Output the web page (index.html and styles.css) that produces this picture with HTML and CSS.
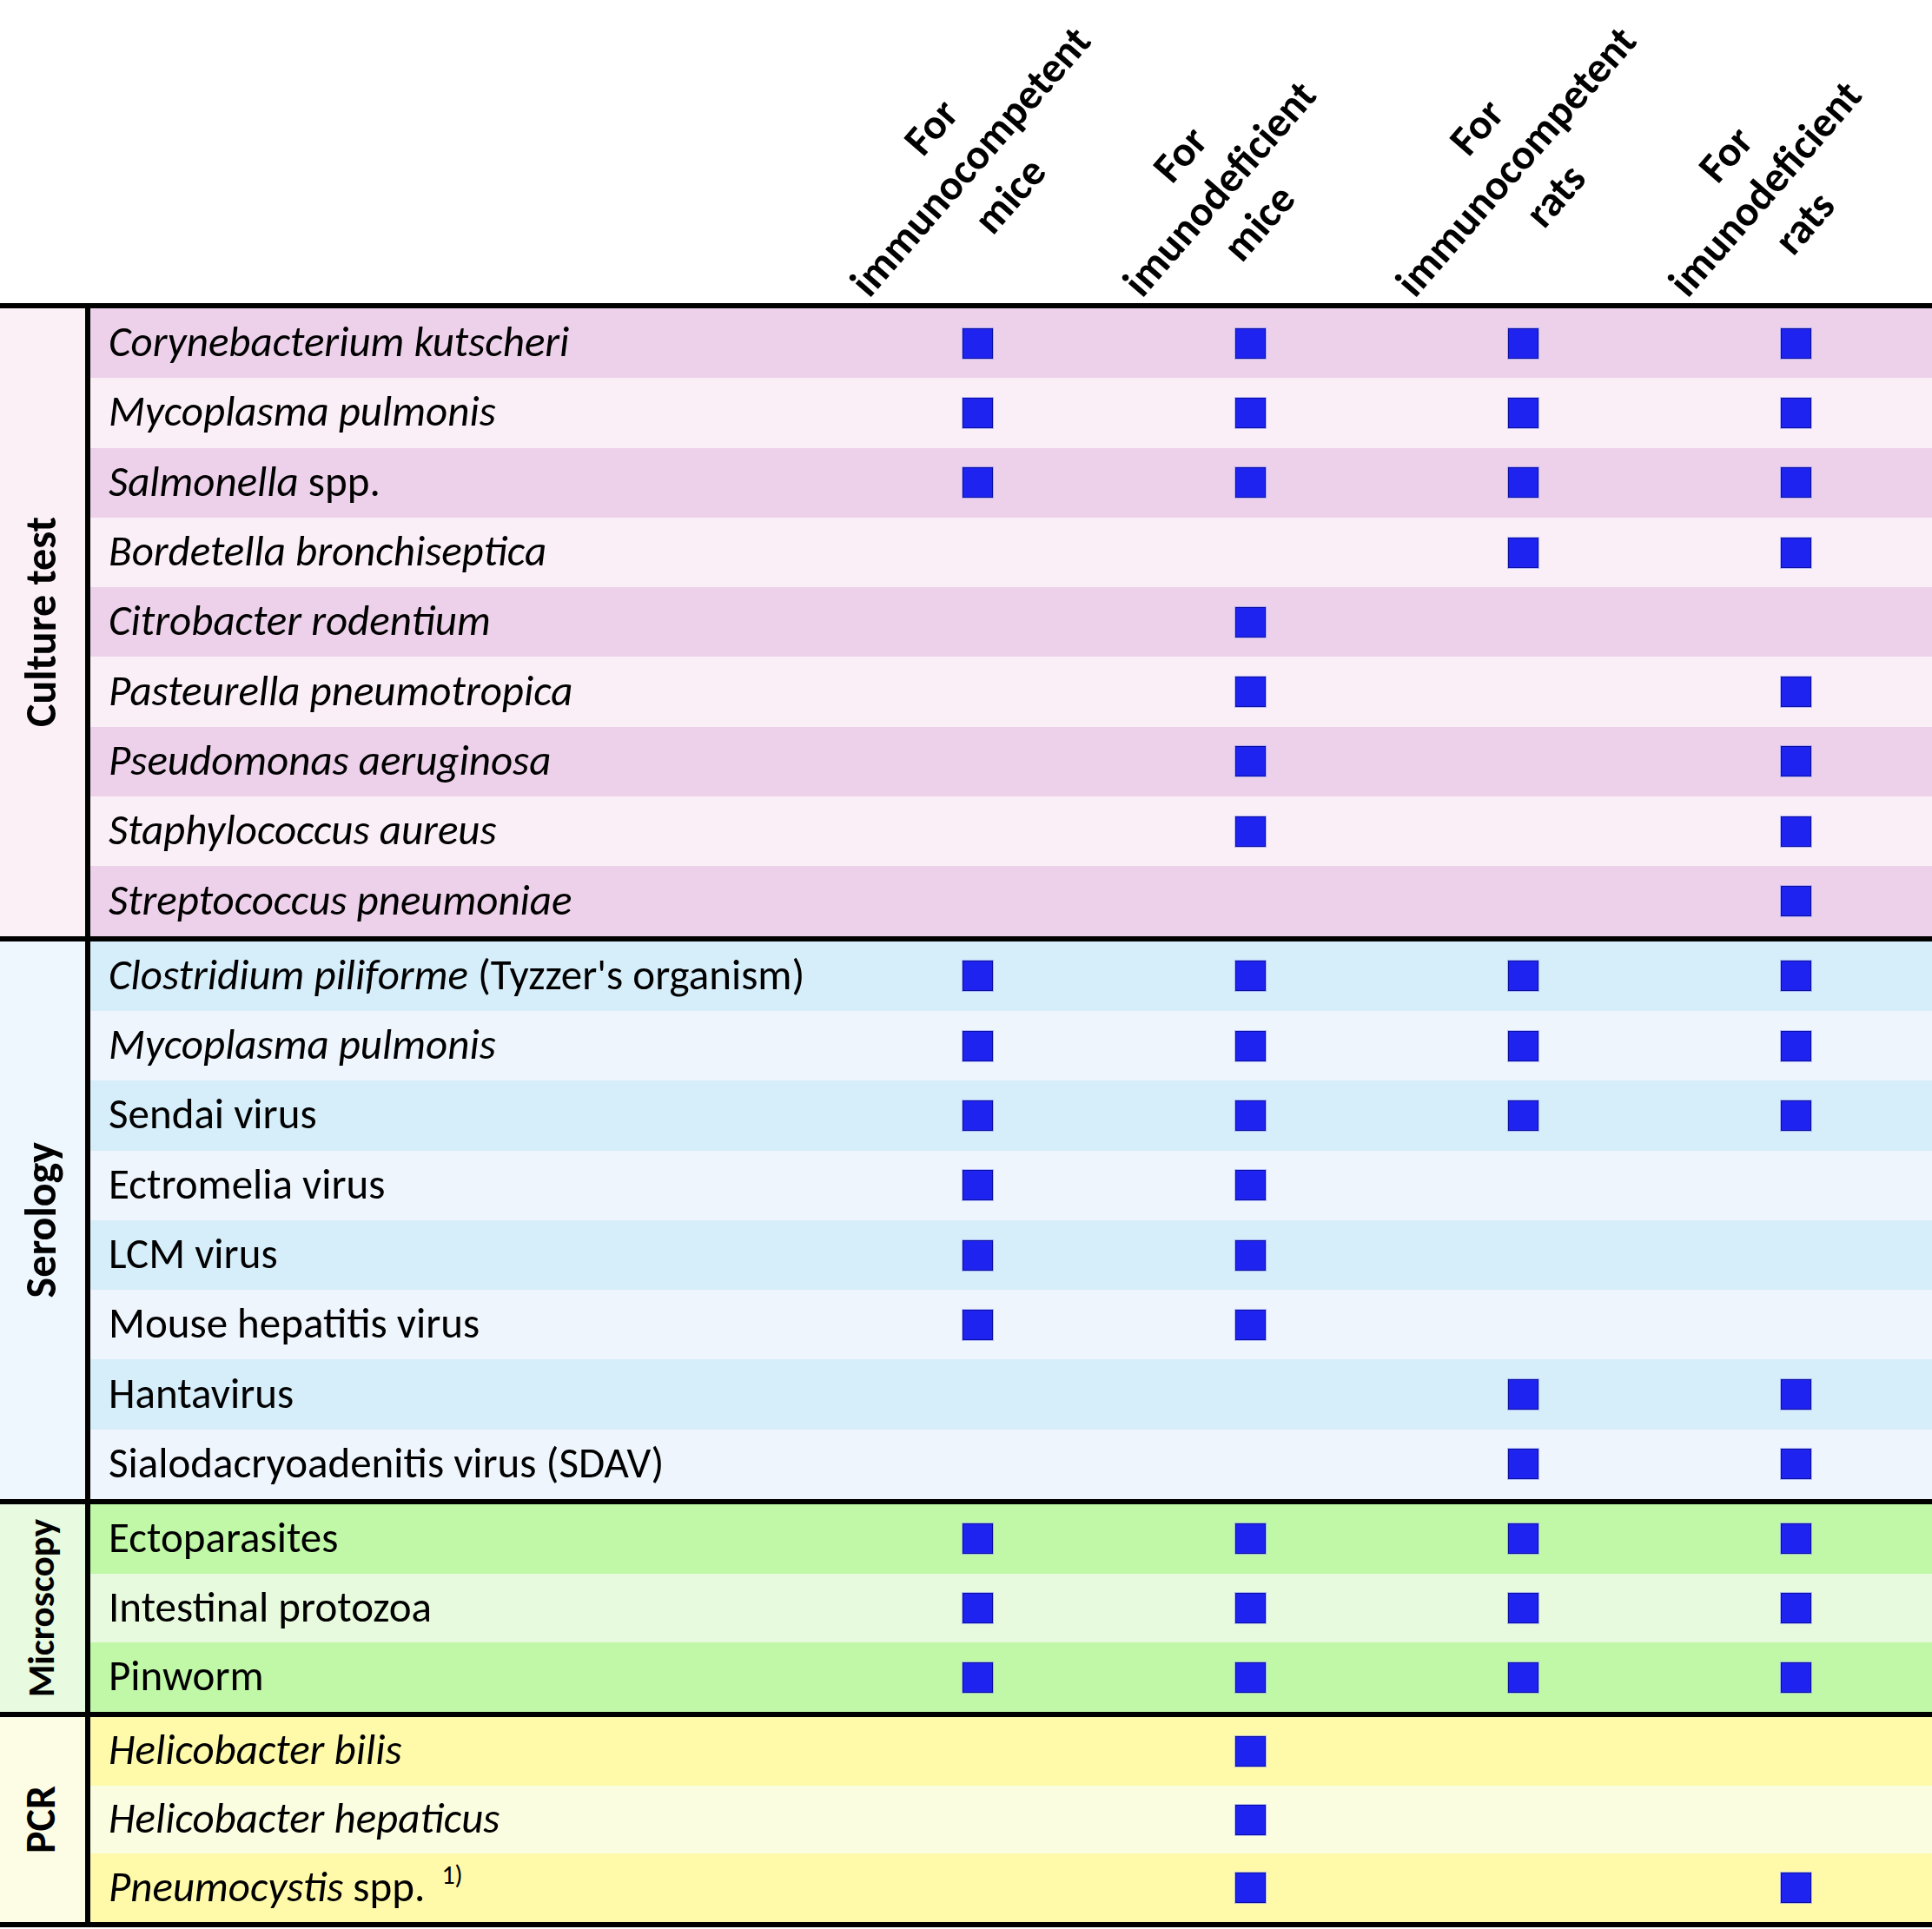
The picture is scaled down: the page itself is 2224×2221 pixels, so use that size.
FILE: index.html
```html
<!DOCTYPE html>
<html>
<head>
<meta charset="utf-8">
<link rel="stylesheet" href="styles.css">
</head>
<body>
<div class="table">
  <div class="head">
    <div class="head-spacer"></div>
    <div class="colhead"><div class="anchor"><div class="rot">For<br>immunocompetent<br>mice</div></div></div>
    <div class="colhead"><div class="anchor"><div class="rot">For<br>imunodeficient<br>mice</div></div></div>
    <div class="colhead"><div class="anchor"><div class="rot">For<br>immunocompetent<br>rats</div></div></div>
    <div class="colhead"><div class="anchor"><div class="rot">For<br>imunodeficient<br>rats</div></div></div>
  </div>
  <div class="rule"></div>
  <section class="group culture">
    <div class="glabel"><span>Culture test</span></div>
    <div class="vline"></div>
    <div class="rows">
      <div class="row"><div class="name"><i>Corynebacterium kutscheri</i></div><div class="cell"><span class="sq"></span></div><div class="cell"><span class="sq"></span></div><div class="cell"><span class="sq"></span></div><div class="cell"><span class="sq"></span></div></div>
      <div class="row"><div class="name"><i>Mycoplasma pulmonis</i></div><div class="cell"><span class="sq"></span></div><div class="cell"><span class="sq"></span></div><div class="cell"><span class="sq"></span></div><div class="cell"><span class="sq"></span></div></div>
      <div class="row"><div class="name"><i>Salmonella</i> spp.</div><div class="cell"><span class="sq"></span></div><div class="cell"><span class="sq"></span></div><div class="cell"><span class="sq"></span></div><div class="cell"><span class="sq"></span></div></div>
      <div class="row"><div class="name"><i>Bordetella bronchiseptica</i></div><div class="cell"></div><div class="cell"></div><div class="cell"><span class="sq"></span></div><div class="cell"><span class="sq"></span></div></div>
      <div class="row"><div class="name"><i>Citrobacter rodentium</i></div><div class="cell"></div><div class="cell"><span class="sq"></span></div><div class="cell"></div><div class="cell"></div></div>
      <div class="row"><div class="name"><i>Pasteurella pneumotropica</i></div><div class="cell"></div><div class="cell"><span class="sq"></span></div><div class="cell"></div><div class="cell"><span class="sq"></span></div></div>
      <div class="row"><div class="name"><i>Pseudomonas aeruginosa</i></div><div class="cell"></div><div class="cell"><span class="sq"></span></div><div class="cell"></div><div class="cell"><span class="sq"></span></div></div>
      <div class="row"><div class="name"><i>Staphylococcus aureus</i></div><div class="cell"></div><div class="cell"><span class="sq"></span></div><div class="cell"></div><div class="cell"><span class="sq"></span></div></div>
      <div class="row"><div class="name"><i>Streptococcus pneumoniae</i></div><div class="cell"></div><div class="cell"></div><div class="cell"></div><div class="cell"><span class="sq"></span></div></div>
    </div>
  </section>
  <div class="rule"></div>
  <section class="group serology">
    <div class="glabel"><span>Serology</span></div>
    <div class="vline"></div>
    <div class="rows">
      <div class="row"><div class="name"><i>Clostridium piliforme</i> (Tyzzer's organism)</div><div class="cell"><span class="sq"></span></div><div class="cell"><span class="sq"></span></div><div class="cell"><span class="sq"></span></div><div class="cell"><span class="sq"></span></div></div>
      <div class="row"><div class="name"><i>Mycoplasma pulmonis</i></div><div class="cell"><span class="sq"></span></div><div class="cell"><span class="sq"></span></div><div class="cell"><span class="sq"></span></div><div class="cell"><span class="sq"></span></div></div>
      <div class="row"><div class="name">Sendai virus</div><div class="cell"><span class="sq"></span></div><div class="cell"><span class="sq"></span></div><div class="cell"><span class="sq"></span></div><div class="cell"><span class="sq"></span></div></div>
      <div class="row"><div class="name">Ectromelia virus</div><div class="cell"><span class="sq"></span></div><div class="cell"><span class="sq"></span></div><div class="cell"></div><div class="cell"></div></div>
      <div class="row"><div class="name">LCM virus</div><div class="cell"><span class="sq"></span></div><div class="cell"><span class="sq"></span></div><div class="cell"></div><div class="cell"></div></div>
      <div class="row"><div class="name">Mouse hepatitis virus</div><div class="cell"><span class="sq"></span></div><div class="cell"><span class="sq"></span></div><div class="cell"></div><div class="cell"></div></div>
      <div class="row"><div class="name">Hantavirus</div><div class="cell"></div><div class="cell"></div><div class="cell"><span class="sq"></span></div><div class="cell"><span class="sq"></span></div></div>
      <div class="row"><div class="name">Sialodacryoadenitis virus (SDAV)</div><div class="cell"></div><div class="cell"></div><div class="cell"><span class="sq"></span></div><div class="cell"><span class="sq"></span></div></div>
    </div>
  </section>
  <div class="rule"></div>
  <section class="group microscopy">
    <div class="glabel"><span class="narrow">Microscopy</span></div>
    <div class="vline"></div>
    <div class="rows">
      <div class="row"><div class="name">Ectoparasites</div><div class="cell"><span class="sq"></span></div><div class="cell"><span class="sq"></span></div><div class="cell"><span class="sq"></span></div><div class="cell"><span class="sq"></span></div></div>
      <div class="row"><div class="name">Intestinal protozoa</div><div class="cell"><span class="sq"></span></div><div class="cell"><span class="sq"></span></div><div class="cell"><span class="sq"></span></div><div class="cell"><span class="sq"></span></div></div>
      <div class="row"><div class="name">Pinworm</div><div class="cell"><span class="sq"></span></div><div class="cell"><span class="sq"></span></div><div class="cell"><span class="sq"></span></div><div class="cell"><span class="sq"></span></div></div>
    </div>
  </section>
  <div class="rule"></div>
  <section class="group pcr">
    <div class="glabel"><span class="short">PCR</span></div>
    <div class="vline"></div>
    <div class="rows">
      <div class="row"><div class="name"><i>Helicobacter bilis</i></div><div class="cell"></div><div class="cell"><span class="sq"></span></div><div class="cell"></div><div class="cell"></div></div>
      <div class="row"><div class="name"><i>Helicobacter hepaticus</i></div><div class="cell"></div><div class="cell"><span class="sq"></span></div><div class="cell"></div><div class="cell"></div></div>
      <div class="row"><div class="name"><i>Pneumocystis</i> spp. <sup class="note">1)</sup></div><div class="cell"></div><div class="cell"><span class="sq"></span></div><div class="cell"></div><div class="cell"><span class="sq"></span></div></div>
    </div>
  </section>
  <div class="rule"></div>
</div>
</body>
</html>
```

FILE: styles.css
```css
html, body {
  margin: 0;
  padding: 0;
  background: #ffffff;
}

body {
  width: 2224px;
  font-family: "Carlito", "Calibri", "Lato", "Liberation Sans", sans-serif;
  color: #000;
}

.table {
  display: flex;
  flex-direction: column;
}

.head {
  display: grid;
  grid-template-columns: 968px repeat(4, 1fr);
  height: 349px;
}

.colhead {
  display: flex;
  align-items: flex-end;
  justify-content: flex-start;
  padding-left: 20px;
  padding-bottom: 16px;
}

.anchor {
  width: 0;
  height: 0;
}

.rot {
  width: max-content;
  white-space: nowrap;
  text-align: center;
  font-weight: 700;
  font-size: 49px;
  line-height: 60px;
  transform-origin: 0 50%;
  transform: translateY(-50%) rotate(-49deg);
}

.rule {
  height: 6px;
  background: #000;
}

.group {
  display: grid;
  grid-template-columns: 98px 6px 1fr;
}

.vline {
  background: #000;
}

.glabel {
  display: flex;
  align-items: center;
  justify-content: center;
  padding-right: 4px;
}

.glabel span {
  writing-mode: vertical-rl;
  transform: rotate(180deg);
  font-weight: 700;
  font-size: 50px;
  line-height: 1;
  white-space: nowrap;
}

.glabel span.narrow {
  font-size: 43px;
}

.glabel span.short {
  font-size: 48px;
}

.rows {
  display: flex;
  flex-direction: column;
}

.row {
  display: grid;
  grid-template-columns: 864px repeat(4, 1fr);
  height: 80.3px;
  align-items: center;
}

.name {
  padding-left: 21px;
  padding-bottom: 4px;
  font-size: 49px;
  white-space: nowrap;
}

.name i {
  font-style: italic;
}

.note {
  font-size: 30px;
  vertical-align: 0;
  position: relative;
  top: -20px;
  margin-left: 8px;
}

.cell {
  display: flex;
  justify-content: center;
  align-items: center;
  height: 100%;
}

.sq {
  width: 33px;
  height: 33px;
  background: #1e23ef;
  border: 1px solid #0c0f9c;
  box-shadow: 0 0 0 1px rgba(140, 150, 255, 0.6);
}

/* section colours */
.culture .glabel { background: #fbf0f6; }
.culture .row:nth-child(odd) { background: #edd1ea; }
.culture .row:nth-child(even) { background: #faeff6; }

.serology .glabel { background: #eef6fe; }
.serology .row:nth-child(odd) { background: #d6edfa; }
.serology .row:nth-child(even) { background: #eef5fd; }

.microscopy .glabel { background: #e8fae0; }
.microscopy .row { height: 79.7px; }
.microscopy .row:nth-child(odd) { background: #c0f8a7; }
.microscopy .row:nth-child(even) { background: #e7fadd; }

.pcr .glabel { background: #fcfde4; }
.pcr .row { height: 78.7px; }
.pcr .row:nth-child(odd) { background: #fefaaa; }
.pcr .row:nth-child(even) { background: #fbfde1; }
```
